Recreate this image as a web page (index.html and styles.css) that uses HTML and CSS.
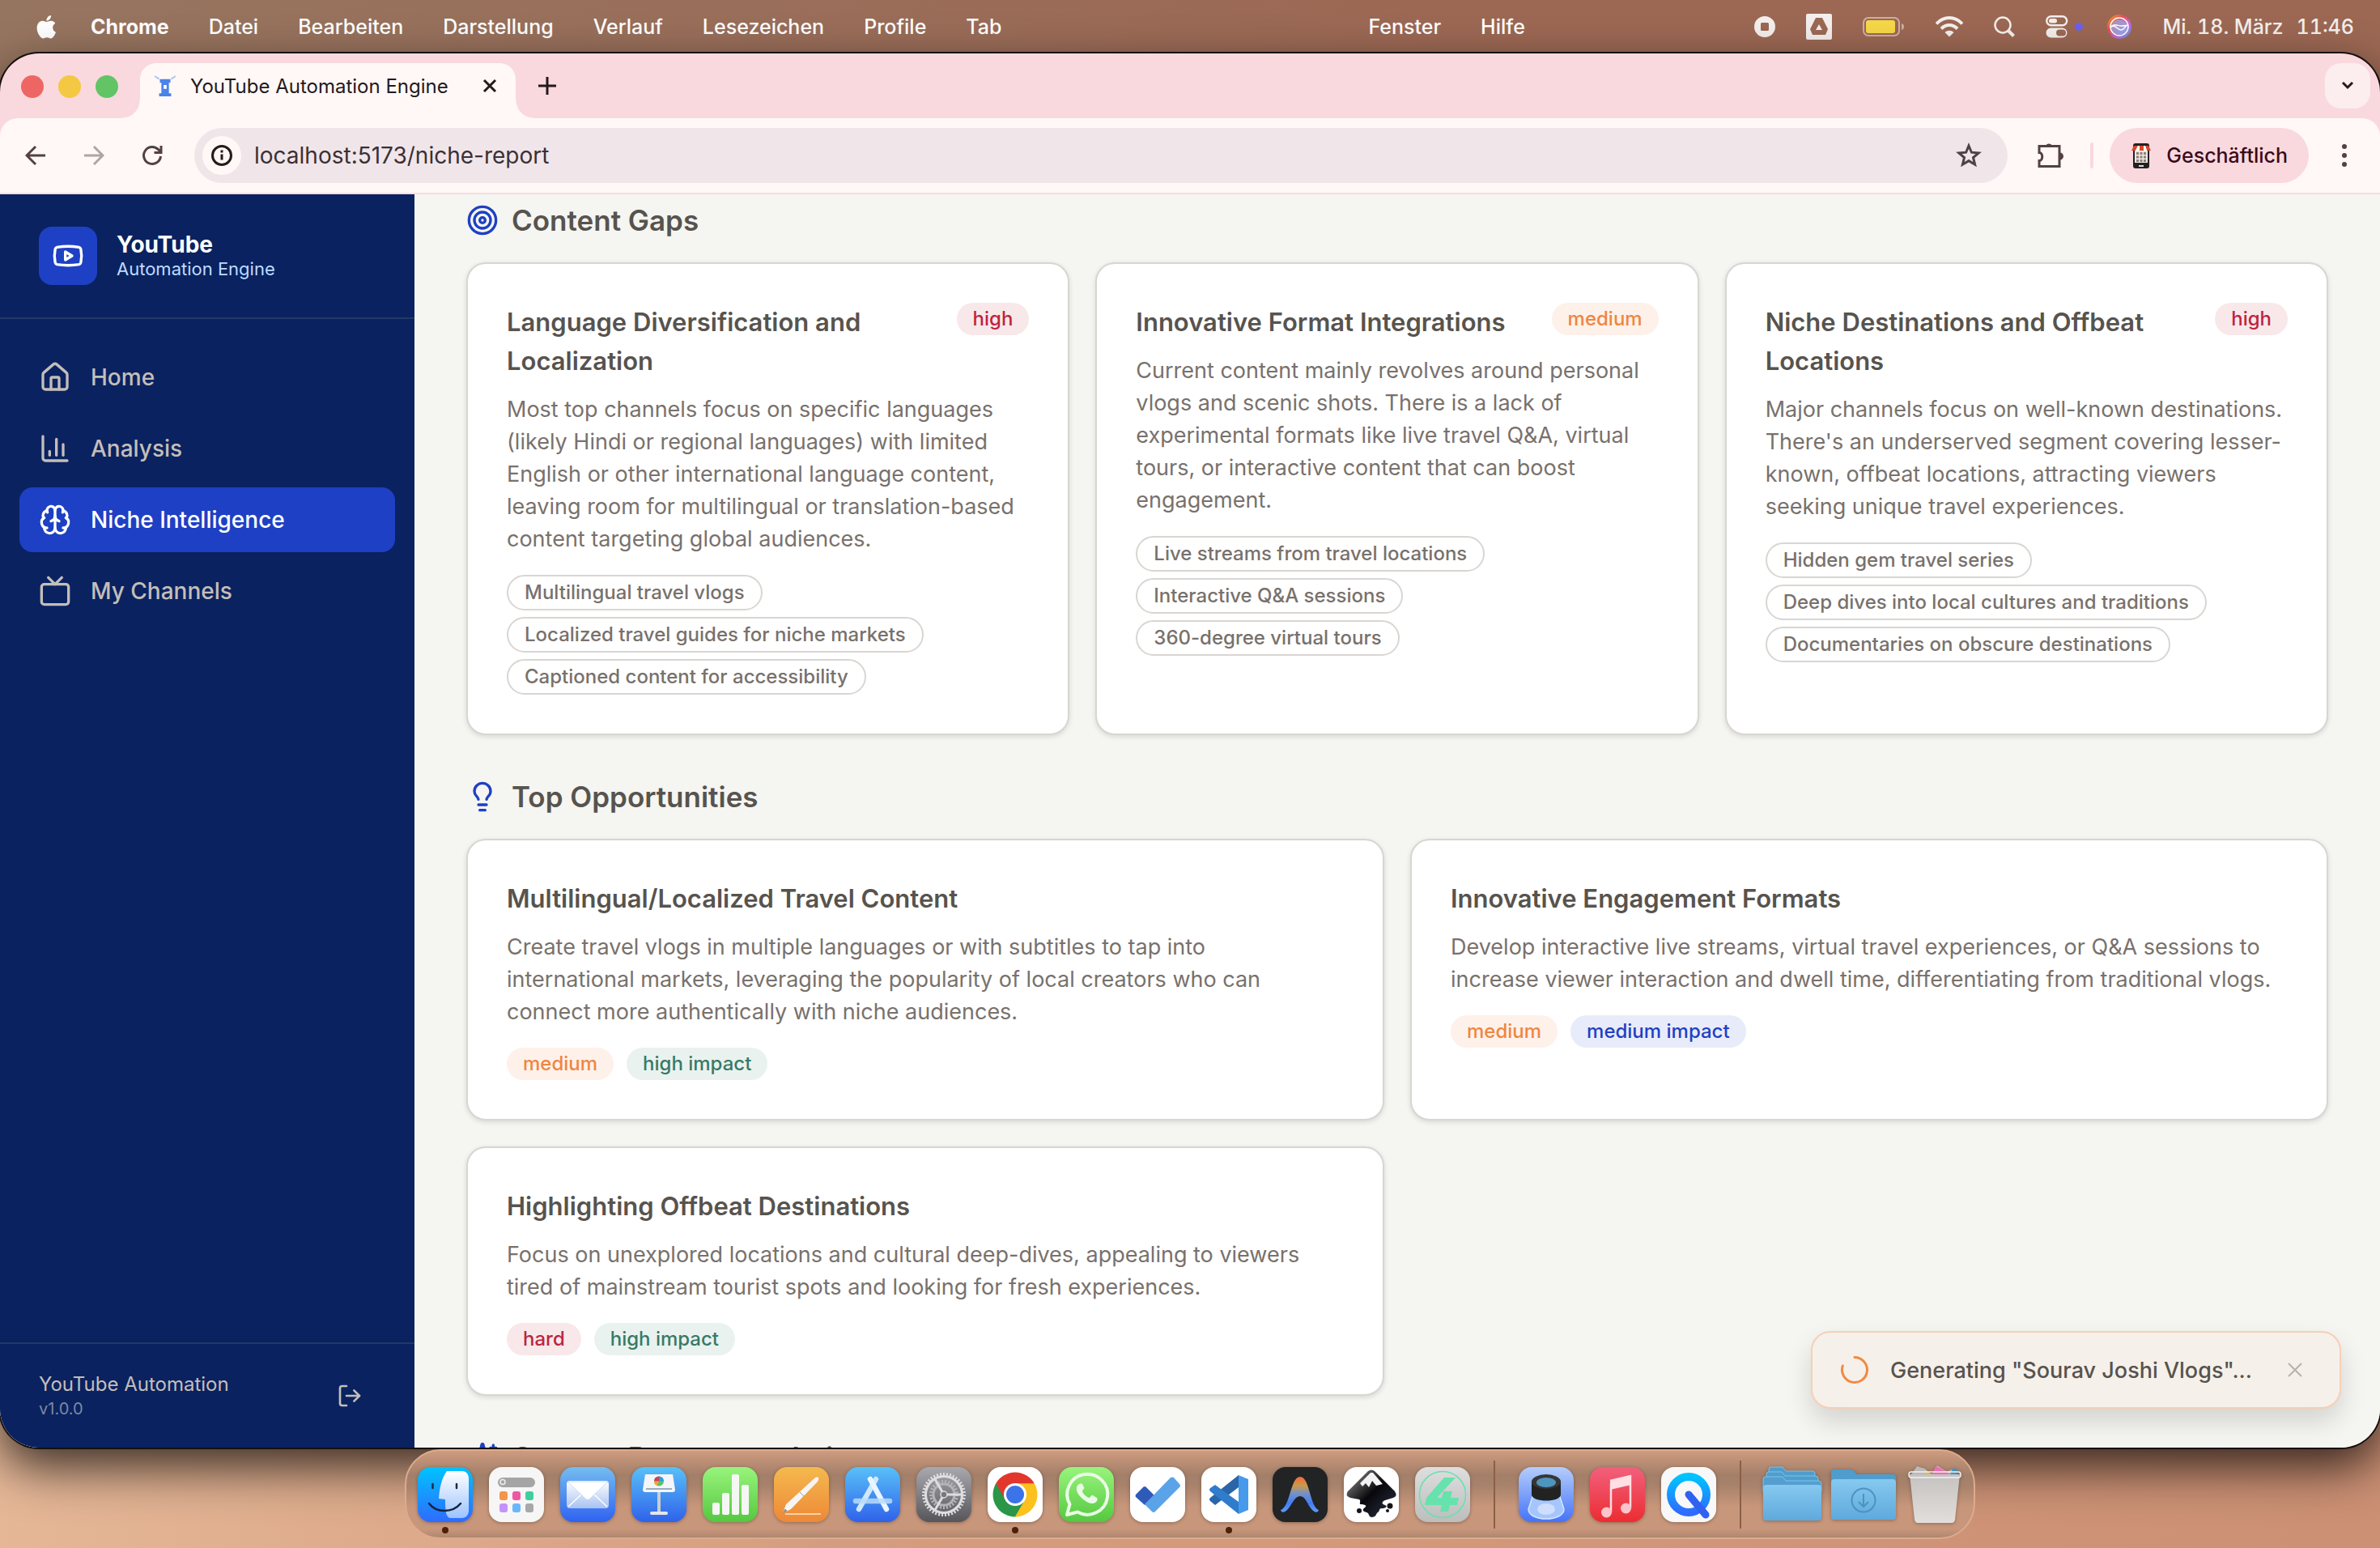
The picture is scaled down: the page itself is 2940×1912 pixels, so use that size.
FILE: index.html
```html
<!DOCTYPE html>
<html lang="en">
<head>
    <meta charset="UTF-8">
    <meta name="viewport" content="width=device-width, initial-scale=1.0">
    <title>YouTube Automation Engine</title>
    <link rel="stylesheet" href="styles.css">
</head>
<body>
    <!-- macOS menu bar -->
    <header class="menubar">
        <svg class="apple" viewBox="0 0 24 28"><path d="M17.6 14.8c0-2.8 2.3-4.1 2.4-4.2-1.3-1.9-3.3-2.2-4.1-2.2-1.7-.2-3.4 1-4.3 1s-2.200-1-3.700-1C6 8.400 4.200 9.500 3.300 11.200c-2 3.400-.5 8.500 1.400 11.200.9 1.400 2.100 2.900 3.500 2.800 1.400-.1 2-.9 3.700-.9s2.200.9 3.700.9c1.500 0 2.500-1.400 3.400-2.700 1.100-1.600 1.500-3.100 1.600-3.200-.1 0-3-1.200-3-4.500zM14.800 6.600c.8-.9 1.300-2.200 1.100-3.500-1.100 0-2.400.7-3.200 1.700-.7.800-1.300 2.100-1.200 3.400 1.300.1 2.500-.7 3.300-1.600z"/></svg>
        <nav class="menu">
            <a href="#" class="app-name">Chrome</a>
            <a href="#">Datei</a>
            <a href="#">Bearbeiten</a>
            <a href="#">Darstellung</a>
            <a href="#">Verlauf</a>
            <a href="#">Lesezeichen</a>
            <a href="#">Profile</a>
            <a href="#">Tab</a>
        </nav>
        <nav class="menu menu-after-notch">
            <a href="#">Fenster</a>
            <a href="#">Hilfe</a>
        </nav>
        <div class="menu-status">
            <svg width="26" height="26" viewBox="0 0 26 26"><path fill-rule="evenodd" d="M13 0a13 13 0 1 0 0 26 13 13 0 0 0 0-26zM9.500 8h7a1.500 1.500 0 0 1 1.500 1.500v7a1.500 1.500 0 0 1-1.500 1.500h-7A1.500 1.500 0 0 1 8 16.500v-7A1.500 1.500 0 0 1 9.500 8z"/></svg>
            <svg width="32" height="32" viewBox="0 0 32 32"><path fill-rule="evenodd" d="M2 0h28a2 2 0 0 1 2 2v28a2 2 0 0 1-2 2H2a2 2 0 0 1-2-2V2a2 2 0 0 1 2-2zM12 5L5 19l3 7h16l3-7-7-14zM16 13l4 7h-8z"/></svg>
            <svg width="52" height="24" viewBox="0 0 52 24"><rect x="1" y="1" width="44" height="22" rx="6" fill="none" stroke="#cdb0a4" stroke-width="2"/><rect x="4" y="4" width="36" height="16" rx="3" fill="#f7d848"/><path d="M48 8c4 1 4 7 0 8z" fill="#cdb0a4"/></svg>
            <svg width="34" height="26" viewBox="0 0 34 26"><g fill="none" stroke="#f4efed" stroke-width="4"><path d="M1 9.500C10-.5 24-.5 33 9.500"/><path d="M7 15.500c6-6 14-6 20 0"/></g><path d="M11.500 20c3-3 8-3 11 0L17 25.500z"/></svg>
            <svg width="26" height="26" viewBox="0 0 26 26"><g fill="none" stroke="#f4efed"><circle cx="11" cy="11" r="9.500" stroke-width="2.500"/><path d="M18 18l6.500 6.500" stroke-width="4"/></g></svg>
            <span class="control-center">
                <svg width="28" height="28" viewBox="0 0 28 28"><rect x="1.200" y="1.200" width="25" height="11" rx="5.500" fill="none" stroke="#f4efed" stroke-width="2.400"/><rect x="4" y="4" width="10" height="5.500" rx="2.700"/><path fill-rule="evenodd" d="M6.500 15.500h14a6 6 0 0 1 0 12h-14a6 6 0 0 1 0-12zM17 17.500a4 4 0 0 0 0 8h4a4 4 0 0 0 0-8z"/></svg>
                <i></i>
            </span>
            <svg width="30" height="30" viewBox="0 0 30 30">
                <defs><linearGradient id="siri" x1="0" y1="0" x2="1" y2="1"><stop offset="0" stop-color="#f0b02c"/><stop offset=".35" stop-color="#e84e50"/><stop offset=".65" stop-color="#c964d8"/><stop offset="1" stop-color="#3fa9f5"/></linearGradient></defs>
                <circle cx="15" cy="15" r="15" fill="url(#siri)"/><circle cx="15" cy="16" r="10" fill="#8fb4ee" fill-opacity=".7"/><g fill="none" stroke="#fff" stroke-width="1.500"><circle cx="15" cy="15" r="11"/><path d="M4 16c6-5 9 3 13 3s6-6 8-6-4 1-8 1-8-4-13 2"/></g>
            </svg>
            <time class="clock"><span>Mi. 18. März</span><span>11:46</span></time>
        </div>
    </header>

    <!-- Browser window -->
    <div class="window">
        <div class="tabstrip">
            <div class="lights"><i class="red"></i><i class="yellow"></i><i class="green"></i></div>
            <div class="tab">
                <svg class="favicon" viewBox="0 0 28 28"><path d="M7 5h14v5h-2v14h3v4H6v-4h3V10H7z" fill="#4a83ea"/><path d="M12 13h4v5h-4z" fill="#fff"/><path d="M0 1l6 4M28 1l-6 4" stroke="#a9c4ee" stroke-width="2"/></svg>
                <span class="tab-title">YouTube Automation Engine</span>
                <button class="tab-close" aria-label="Close tab"><svg width="18" height="18" viewBox="0 0 18 18"><path d="M2 2l14 14M16 2L2 16"/></svg></button>
            </div>
            <button class="new-tab" aria-label="New tab"><svg width="22" height="22" viewBox="0 0 22 22"><path d="M11 0v22M0 11h22"/></svg></button>
            <button class="tab-search" aria-label="Search tabs"><svg width="16" height="12" viewBox="0 0 16 12"><path d="M2 2l6 6 6-6"/></svg></button>
        </div>
        <div class="toolbar">
            <button class="tool" aria-label="Back"><svg width="26" height="26" viewBox="0 0 26 26"><path d="M25 13H3M13 2L2 13l11 11"/></svg></button>
            <button class="tool muted" aria-label="Forward"><svg width="26" height="26" viewBox="0 0 26 26"><path d="M1 13h22M13 2l11 11-11 11"/></svg></button>
            <button class="tool" aria-label="Reload"><svg width="26" height="26" viewBox="0 0 26 26"><path d="M23.500 14A10.500 10.500 0 1 1 20.500 5.600L24 9M24 1v8.500h-8.500"/></svg></button>
            <div class="address">
                <button class="site-info" aria-label="Site information"><svg width="28" height="28" viewBox="0 0 28 28"><circle cx="14" cy="14" r="11.500"/><path d="M14 12.500v7M14 7.500v3"/></svg></button>
                <input class="url" type="text" value="localhost:5173/niche-report" aria-label="Address">
                <button class="star" aria-label="Bookmark"><svg width="32" height="32" viewBox="0 0 32 32"><path d="M16 4l3.400 8.200 8.800.7-6.700 5.700 2.100 8.600L16 22.600l-7.600 4.600 2.100-8.600-6.700-5.700 8.800-.7z"/></svg></button>
            </div>
            <button class="puzzle" aria-label="Extensions"><svg width="34" height="34" viewBox="0 0 34 34"><path d="M3 5.500h25v25H3v-7c5 0 5-10 0-10z"/><path class="solid" d="M11 5a4.500 4.500 0 0 1 8 0zM28.500 13.500a4.500 4.500 0 0 1 0 9z"/></svg></button>
            <span class="tool-divider"></span>
            <button class="profile">
                <svg width="26" height="32" viewBox="0 0 26 32"><rect x="3" y="1" width="20" height="31" rx="3" fill="#222"/><rect x="5" y="4" width="16" height="21" fill="#eee7e2"/><path d="M7 12h3v3H7zM11.500 12h3v3h-3zM16 12h3v3h-3zM7 16.500h3v3H7zM11.500 16.500h3v3h-3zM16 16.500h3v3h-3zM7 21h3v3H7zM11.500 21h3v3h-3zM16 21h3v3h-3z" fill="#8f7e78"/><path d="M4 4h5l-3 6H1zM11 4h5v6h-5zM18 4h4l3 6h-5z" fill="#d8472b"/><path d="M9 4h2v6H6zM16 4h2l2 6h-4z" fill="#fff"/><rect x="10" y="28" width="6" height="2" fill="#ddd"/></svg>
                Geschäftlich
            </button>
            <button class="more" aria-label="Menu"><svg width="8" height="30" viewBox="0 0 8 30"><circle cx="4" cy="4" r="3"/><circle cx="4" cy="15" r="3"/><circle cx="4" cy="26" r="3"/></svg></button>
        </div>

        <div class="app">
            <aside class="sidebar">
                <div class="brand">
                    <div class="brand-logo">
                        <svg class="icon" viewBox="0 0 24 24"><path d="M2.500 17a24.120 24.120 0 0 1 0-10 2 2 0 0 1 1.400-1.400 49.560 49.560 0 0 1 16.200 0A2 2 0 0 1 21.500 7a24.120 24.120 0 0 1 0 10 2 2 0 0 1-1.400 1.400 49.550 49.550 0 0 1-16.200 0A2 2 0 0 1 2.500 17"/><path d="m10 15 5-3-5-3z"/></svg>
                    </div>
                    <div>
                        <div class="brand-name">YouTube</div>
                        <div class="brand-sub">Automation Engine</div>
                    </div>
                </div>
                <nav class="side-nav">
                    <a href="#"><svg class="icon" viewBox="0 0 24 24"><path d="M15 21v-8a1 1 0 0 0-1-1h-4a1 1 0 0 0-1 1v8"/><path d="M3 10a2 2 0 0 1 .709-1.528l7-5.999a2 2 0 0 1 2.582 0l7 5.999A2 2 0 0 1 21 10v9a2 2 0 0 1-2 2H5a2 2 0 0 1-2-2z"/></svg>Home</a>
                    <a href="#"><svg class="icon" viewBox="0 0 24 24"><path d="M3 3v16a2 2 0 0 0 2 2h16"/><path d="M18 17V9"/><path d="M13 17V5"/><path d="M8 17v-3"/></svg>Analysis</a>
                    <a href="#" class="active"><svg class="icon" viewBox="0 0 24 24"><path d="M12 18V5"/><path d="M15 13a4.170 4.170 0 0 1-3-4 4.170 4.170 0 0 1-3 4"/><path d="M17.598 6.500A3 3 0 1 0 12 5a3 3 0 1 0-5.598 1.500"/><path d="M17.997 5.125a4 4 0 0 1 2.526 5.770"/><path d="M18 18a4 4 0 0 0 2-7.464"/><path d="M19.967 17.483A4 4 0 1 1 12 18a4 4 0 1 1-7.967-.517"/><path d="M6 18a4 4 0 0 1-2-7.464"/><path d="M6.003 5.125a4 4 0 0 0-2.526 5.770"/></svg>Niche Intelligence</a>
                    <a href="#"><svg class="icon" viewBox="0 0 24 24"><path d="m17 2-5 5-5-5"/><rect width="20" height="15" x="2" y="7" rx="2"/></svg>My Channels</a>
                </nav>
                <div class="side-footer">
                    <div>
                        <div class="footer-name">YouTube Automation</div>
                        <div class="footer-version">v1.0.0</div>
                    </div>
                    <button class="logout" aria-label="Log out"><svg class="icon" viewBox="0 0 24 24"><path d="m16 17 5-5-5-5"/><path d="M21 12H9"/><path d="M9 21H5a2 2 0 0 1-2-2V5a2 2 0 0 1 2-2h4"/></svg></button>
                </div>
            </aside>

            <main class="content">
                <section>
                    <h2><svg class="icon" viewBox="0 0 24 24"><circle cx="12" cy="12" r="10"/><circle cx="12" cy="12" r="6"/><circle cx="12" cy="12" r="2"/></svg>Content Gaps</h2>
                    <div class="cards three">
                        <article class="card">
                            <div class="card-head">
                                <h3>Language Diversification and Localization</h3>
                                <span class="badge red">high</span>
                            </div>
                            <p>Most top channels focus on specific languages (likely Hindi or regional languages) with limited English or other international language content, leaving room for multilingual or translation-based content targeting global audiences.</p>
                            <ul class="chips">
                                <li>Multilingual travel vlogs</li>
                                <li>Localized travel guides for niche markets</li>
                                <li>Captioned content for accessibility</li>
                            </ul>
                        </article>
                        <article class="card">
                            <div class="card-head">
                                <h3>Innovative Format Integrations</h3>
                                <span class="badge orange">medium</span>
                            </div>
                            <p>Current content mainly revolves around personal vlogs and scenic shots. There is a lack of experimental formats like live travel Q&amp;A, virtual tours, or interactive content that can boost engagement.</p>
                            <ul class="chips">
                                <li>Live streams from travel locations</li>
                                <li>Interactive Q&amp;A sessions</li>
                                <li>360-degree virtual tours</li>
                            </ul>
                        </article>
                        <article class="card">
                            <div class="card-head">
                                <h3>Niche Destinations and Offbeat Locations</h3>
                                <span class="badge red">high</span>
                            </div>
                            <p>Major channels focus on well-known destinations. There's an underserved segment covering lesser-known, offbeat locations, attracting viewers seeking unique travel experiences.</p>
                            <ul class="chips">
                                <li>Hidden gem travel series</li>
                                <li>Deep dives into local cultures and traditions</li>
                                <li>Documentaries on obscure destinations</li>
                            </ul>
                        </article>
                    </div>
                </section>

                <section>
                    <h2><svg class="icon" viewBox="0 0 24 24"><path d="M15 14c.2-1 .7-1.700 1.500-2.500 1-.9 1.500-2.200 1.500-3.500A6 6 0 0 0 6 8c0 1 .2 2.200 1.500 3.500.7.7 1.300 1.500 1.500 2.500"/><path d="M9 18h6"/><path d="M10 22h4"/></svg>Top Opportunities</h2>
                    <div class="cards two">
                        <article class="card">
                            <h3>Multilingual/Localized Travel Content</h3>
                            <p>Create travel vlogs in multiple languages or with subtitles to tap into international markets, leveraging the popularity of local creators who can connect more authentically with niche audiences.</p>
                            <div class="badges"><span class="badge orange">medium</span><span class="badge green">high impact</span></div>
                        </article>
                        <article class="card">
                            <h3>Innovative Engagement Formats</h3>
                            <p>Develop interactive live streams, virtual travel experiences, or Q&amp;A sessions to increase viewer interaction and dwell time, differentiating from traditional vlogs.</p>
                            <div class="badges"><span class="badge orange">medium</span><span class="badge blue">medium impact</span></div>
                        </article>
                        <article class="card">
                            <h3>Highlighting Offbeat Destinations</h3>
                            <p>Focus on unexplored locations and cultural deep-dives, appealing to viewers tired of mainstream tourist spots and looking for fresh experiences.</p>
                            <div class="badges"><span class="badge red">hard</span><span class="badge green">high impact</span></div>
                        </article>
                    </div>
                </section>

                <section>
                    <h2><svg class="icon" viewBox="0 0 24 24"><path d="M9.937 15.500A2 2 0 0 0 8.500 14.063l-6.135-1.582a.5.5 0 0 1 0-.962L8.500 9.936A2 2 0 0 0 9.937 8.500l1.582-6.135a.5.5 0 0 1 .963 0L14.063 8.500A2 2 0 0 0 15.500 9.937l6.135 1.581a.5.5 0 0 1 0 .964L15.500 14.063a2 2 0 0 0-1.437 1.437l-1.582 6.135a.5.5 0 0 1-.963 0z"/><path d="M20 3v4"/><path d="M22 5h-4"/></svg>Content Recommendations</h2>
                </section>
            </main>

            <div class="toast" role="status">
                <svg class="spinner" viewBox="0 0 36 36"><path d="M18 2.500A15.500 15.500 0 1 1 3.300 13"/></svg>
                <span>Generating "Sourav Joshi Vlogs"...</span>
                <button class="toast-close" aria-label="Dismiss"><svg width="18" height="18" viewBox="0 0 18 18"><path d="M1 1l16 16M17 1L1 17"/></svg></button>
            </div>
        </div>
    </div>

    <!-- Dock -->
    <footer class="dock-area">
        <div class="dock">
            <a href="#" class="running" aria-label="Finder"><svg viewBox="0 0 68 68">
                <defs>
                    <linearGradient id="finder" x2="0" y2="1"><stop stop-color="#00c3ff"/><stop offset="1" stop-color="#2f6bff"/></linearGradient>
                    <linearGradient id="finderFace" x2="0" y2="1"><stop stop-color="#fff"/><stop offset="1" stop-color="#9cc3ff"/></linearGradient>
                    <linearGradient id="skyBlue" x2="0" y2="1"><stop stop-color="#74bdf0"/><stop offset="1" stop-color="#2f62f0"/></linearGradient>
                    <linearGradient id="cyanBlue" x2="0" y2="1"><stop stop-color="#58c0f8"/><stop offset="1" stop-color="#2f62ea"/></linearGradient>
                    <linearGradient id="green" x2="0" y2="1"><stop stop-color="#98f47c"/><stop offset="1" stop-color="#55c840"/></linearGradient>
                    <linearGradient id="orange" x2="0" y2="1"><stop stop-color="#f5b94e"/><stop offset="1" stop-color="#ee8837"/></linearGradient>
                    <linearGradient id="gray" x2="0" y2="1"><stop stop-color="#a8a8ae"/><stop offset="1" stop-color="#56565a"/></linearGradient>
                    <linearGradient id="red" x2="0" y2="1"><stop stop-color="#f2607c"/><stop offset="1" stop-color="#ec2c32"/></linearGradient>
                    <linearGradient id="folder" x2="0" y2="1"><stop stop-color="#86c9f0"/><stop offset="1" stop-color="#5fa9dc"/></linearGradient>
                    <linearGradient id="loupe" x2="0" y2="1"><stop stop-color="#b4cdfb"/><stop offset="1" stop-color="#4573f8"/></linearGradient>
                    <linearGradient id="arc" x2="0" y2="1"><stop stop-color="#f26a3c"/><stop offset=".25" stop-color="#c99a4a"/><stop offset=".5" stop-color="#6f8fd0"/><stop offset=".75" stop-color="#3f7ef5"/><stop offset="1" stop-color="#5f9bff"/></linearGradient>
                    <linearGradient id="envelope" x2="0" y2="1"><stop stop-color="#fff"/><stop offset="1" stop-color="#a8c2f2"/></linearGradient>
                    <linearGradient id="silver" x2="0" y2="1"><stop stop-color="#dedede"/><stop offset="1" stop-color="#bdbdbd"/></linearGradient>
                    <linearGradient id="bin" x2="0" y2="1"><stop stop-color="#c4c2c0"/><stop offset="1" stop-color="#e2dedc"/></linearGradient>
                    <linearGradient id="ink" x1="0" y1="0" x2="1" y2="1"><stop stop-color="#999"/><stop offset=".5" stop-color="#08080c"/><stop offset="1" stop-color="#2c3348"/></linearGradient>
                </defs>
                <rect width="68" height="68" rx="16" fill="url(#finder)"/><path d="M26 39c1-14 4-26 10-34h19c5 0 8 4 8 9v39c0 6-3 10-9 10H41c-6 0-7-8-7-23z" fill="url(#finderFace)"/><path d="M18.500 21v5M48 21v5" stroke="#1b2a44" stroke-width="2.500" stroke-linecap="round"/><path d="M14 45c9 12 29 12 39 0" fill="none" stroke="#13233c" stroke-width="2.500" stroke-linecap="round"/></svg></a>
            <a href="#" aria-label="Apps"><svg viewBox="0 0 68 68"><rect width="68" height="68" rx="16" fill="#f6f6f6"/><rect x="11" y="13" width="46" height="12" rx="6" fill="#a5a5a5"/><circle cx="17" cy="18.500" r="3" fill="none" stroke="#eee" stroke-width="1.500"/><rect x="13" y="30" width="10" height="11" rx="3" fill="#f5944a"/><rect x="29" y="30" width="10" height="11" rx="3" fill="#ee58a5"/><rect x="45" y="30" width="10" height="11" rx="3" fill="#3fcf9e"/><rect x="13" y="45" width="10" height="11" rx="3" fill="#c493fa"/><rect x="29" y="45" width="10" height="11" rx="3" fill="#69b7fa"/><rect x="45" y="45" width="10" height="11" rx="3" fill="#a8a8a8"/></svg></a>
            <a href="#" aria-label="Mail"><svg viewBox="0 0 68 68"><rect width="68" height="68" rx="16" fill="url(#skyBlue)"/><rect x="8" y="17" width="52" height="34" rx="4" fill="url(#envelope)"/><path d="M10 49l18-17M58 49L40 32" stroke="#fff" stroke-width="1.500"/><path d="M9 18h50L38 38c-3 3-5 3-8 0z" fill="#fff" stroke="#c9dbf7" stroke-width="1"/></svg></a>
            <a href="#" aria-label="Keynote"><svg viewBox="0 0 68 68"><rect width="68" height="68" rx="16" fill="url(#cyanBlue)"/><path d="M34 28v28" stroke="#c9cdd4" stroke-width="4"/><rect x="23" y="55" width="22" height="4" rx="2" fill="#e4e6ea"/><path d="M17 9h34l3 19q0 3-3 3H17q-3 0-3-3z" fill="#f3f5f8"/><path d="M18 27h32" stroke="#7d93ab" stroke-width="1.500"/><circle cx="34" cy="17.500" r="6" fill="#5ac26a"/><path d="M34 17.500v-6a6 6 0 0 1 6 6z" fill="#2f9be8"/><path d="M34 17.500v-6a6 6 0 0 0-6 6z" fill="#d43c55"/><path d="M34 17.500h-6a6 6 0 0 0 4 5.500z" fill="#f3a33a"/></svg></a>
            <a href="#" aria-label="Numbers"><svg viewBox="0 0 68 68"><rect width="68" height="68" rx="16" fill="url(#green)"/><g fill="#f5f7f4"><rect x="12" y="44" width="9" height="15" rx="2"/><rect x="24" y="32" width="9" height="27" rx="2"/><rect x="36" y="9" width="9" height="50" rx="2"/><rect x="48" y="22" width="9" height="37" rx="2"/></g></svg></a>
            <a href="#" aria-label="Pages"><svg viewBox="0 0 68 68"><rect width="68" height="68" rx="16" fill="url(#orange)"/><path d="M14 58h44" stroke="#fbd3a4" stroke-width="2"/><path d="M11 57l4-11L50 14c4-3 7-1 4 4L21 52z" fill="#f7f5f3"/><path d="M32 31l5 5M11 57l3-5 2 2z" fill="#888" stroke="#999" stroke-width="1"/></svg></a>
            <a href="#" aria-label="App Store"><svg viewBox="0 0 68 68"><rect width="68" height="68" rx="16" fill="url(#cyanBlue)"/><g stroke-width="6.500" stroke-linecap="round" fill="none"><path d="M38 15L17 52" stroke="#cfe8fc"/><path d="M31 15l20 37" stroke="#e9f5ff"/><path d="M13 42h42" stroke="#b9dbfb" stroke-opacity=".85"/></g></svg></a>
            <a href="#" aria-label="System Settings"><svg viewBox="0 0 68 68"><rect width="68" height="68" rx="16" fill="url(#gray)"/><g fill="none"><circle cx="34" cy="34" r="25" stroke="#dedee0" stroke-width="4" stroke-dasharray="2 2"/><circle cx="34" cy="34" r="22.500" stroke="#dedee0" stroke-width="3"/><circle cx="34" cy="34" r="16" stroke="#b4b4b8" stroke-width="4" stroke-dasharray="2 2"/><circle cx="34" cy="34" r="13" stroke="#b4b4b8" stroke-width="3"/><path d="M34 34h22M34 34L23 15M34 34L23 53" stroke="#dedee0" stroke-width="3"/></g><circle cx="34" cy="34" r="4" fill="#77777c" stroke="#dedee0" stroke-width="1.500"/></svg></a>
            <a href="#" class="running" aria-label="Chrome"><svg viewBox="0 0 68 68"><rect width="68" height="68" rx="16" fill="#fff"/><path d="M34 34L10.200 20.300A27.500 27.500 0 0 1 57.800 20.300z" fill="#e2372c"/><path d="M34 34L57.800 20.300A27.500 27.500 0 0 1 34 61.500z" fill="#fcc11c"/><path d="M34 34v27.500A27.500 27.500 0 0 1 10.200 20.300z" fill="#2a9648"/><path d="M34 20.300h23.800L46 40.500z" fill="#fcc11c"/><path d="M10.200 20.300L22 41l12-7V20.300z" fill="#e2372c"/><path d="M22 41l12 20.500L46 41z" fill="#2a9648"/><path d="M46 41L34 61.500 40 61l12-15z" fill="#fcc11c"/><circle cx="34" cy="34" r="14" fill="#fff"/><circle cx="34" cy="34" r="11" fill="#3b74e8"/></svg></a>
            <a href="#" aria-label="WhatsApp"><svg viewBox="0 0 68 68"><rect width="68" height="68" rx="16" fill="url(#green)"/><path d="M10 59l3.500-13A25 25 0 1 1 23 55.500z" fill="none" stroke="#eafbe5" stroke-width="4" stroke-linejoin="round"/><path d="M25 21c-5 3-4 10 2 16s13 10 18 7c3-2 3-5 2-6l-5-3c-2-1-3 3-5 3-3-1-8-6-8-8s3-3 2-5l-2-4c-1-1-3-1-4 0z" fill="#eafbe5"/></svg></a>
            <a href="#" aria-label="To Do"><svg viewBox="0 0 68 68"><rect width="68" height="68" rx="16" fill="#fff"/><path d="M7 34l9-9q2-2 4 0l11 11-10 10q-2 2-4 0L7 37q-1-1 0-3z" fill="#2f5ab8"/><path d="M18 46l32-33q2-1 4 0l7 8q2 2 0 4L31 55q-2 2-4 0z" fill="#5ba3e8"/></svg></a>
            <a href="#" class="running" aria-label="Visual Studio Code"><svg viewBox="0 0 68 68"><rect width="68" height="68" rx="16" fill="#fff"/><path d="M46 10v15L17 47l-6-5q-2-2 0-4z" fill="#2a65a8"/><path d="M46 58V43L17 22l-6 4q-2 2 0 4z" fill="#2f7ccc"/><path d="M46 10l12 5v38l-12 5z" fill="#4799ec"/></svg></a>
            <a href="#" aria-label="Antigravity"><svg viewBox="0 0 68 68"><rect width="68" height="68" rx="16" fill="#222325"/><path d="M10 53c12-4 12-41 24-41s12 37 23 41c-1 4-5 3-8 0-6-6-8-17-15-17s-10 11-16 17c-3 3-7 4-8 0z" fill="url(#arc)"/></svg></a>
            <a href="#" aria-label="Inkscape"><svg viewBox="0 0 68 68"><rect width="68" height="68" rx="16" fill="#fff"/><path d="M30 5q4-3 8 0l25 25q4 6-2 8l-10 3c-5 2-4 5 0 6 4 2 0 4-4 4s-2 3-5 5-1 5-7 6c-5 0-3-5-7-6s-6-3-2-6-2-4-5-4 1-4-2-6l-11-2q-7-3-3-8z" fill="url(#ink)"/><path d="M33 7L20 20l3 4 4-4 4 5 4-8 5 6 8-2L36 7z" fill="#f2f2f2"/><circle cx="19" cy="54" r="3" fill="#14141a"/><circle cx="57" cy="48" r="3.500" fill="#14141a"/><circle cx="54" cy="54" r="2" fill="#14141a"/></svg></a>
            <a href="#" aria-label="4alone"><svg viewBox="0 0 68 68"><rect width="68" height="68" rx="16" fill="url(#silver)"/><circle cx="34" cy="34" r="28.500" fill="none" stroke="#66e2ad" stroke-width="1.500"/><path d="M36 13h14L27 38h6l2-8h11l-2 8h10l-2 9H43l-2 8H31l2-8H12l2-9z" fill="#66e2ad"/></svg></a>
            <span class="dock-divider"></span>
            <a href="#" aria-label="Preview"><svg viewBox="0 0 68 68"><rect width="68" height="68" rx="16" fill="url(#loupe)"/><path d="M18 34h32l6 18c0 16-44 16-44 0z" fill="#a5c6fc" stroke="#d5e6ff" stroke-width="1.500"/><ellipse cx="34" cy="52" rx="11" ry="7" fill="#cfdefd"/><path d="M16 17h36v17c0 10-36 10-36 0z" fill="#222"/><ellipse cx="34" cy="18" rx="18" ry="9" fill="#363636"/><ellipse cx="34" cy="19" rx="12" ry="6" fill="#4d95bf"/></svg></a>
            <a href="#" aria-label="Music"><svg viewBox="0 0 68 68"><rect width="68" height="68" rx="16" fill="url(#red)"/><path d="M25 17l25-6v40" fill="none" stroke="#ffdfe4" stroke-width="2.500"/><path d="M25 17l26-6v11l-26 6z" fill="#ffdfe4"/><path d="M26 20v36" stroke="#ffdfe4" stroke-width="2.500"/><circle cx="20.500" cy="56" r="6.500" fill="#fbc3ca"/><circle cx="44.500" cy="51" r="6.500" fill="#fbc3ca"/></svg></a>
            <a href="#" aria-label="QuickTime"><svg viewBox="0 0 68 68"><rect width="68" height="68" rx="16" fill="#f8f8f8"/><circle cx="34" cy="34" r="22" fill="none" stroke="url(#finder)" stroke-width="10"/><path d="M34 34l21 25" stroke="#2f62f0" stroke-width="9" stroke-linecap="round"/></svg></a>
            <span class="dock-divider"></span>
            <a href="#" aria-label="Documents"><svg viewBox="0 0 68 68"><g stroke="#7cc3ec" stroke-width="1"><path d="M5 3q0-3 3-3h14l4 5h33q3 0 3 3v14H5z" fill="#4f9dcc"/><path d="M2 9q0-3 3-3h16l4 5h37q4 0 4 3v8H2z" fill="#4f9dcc"/><path d="M-2 15q0-3 3-3h21l4 5h40q4 0 4 3v10H-2z" fill="#559fd0"/></g><rect x="-2" y="22" width="72" height="44" rx="4" fill="url(#folder)"/></svg></a>
            <a href="#" aria-label="Downloads"><svg viewBox="0 0 68 68"><path d="M-6 6q0-3 4-3h20q3 0 5 3l3 3h44q4 0 4 4v12H-6z" fill="#4f9dcc"/><rect x="-6" y="15" width="80" height="50" rx="4" fill="url(#folder)"/><g fill="none" stroke="#4d92c2" stroke-width="2"><circle cx="34" cy="41" r="14.500"/><path d="M34 33v15M28 43l6 6 6-6"/></g></svg></a>
            <a href="#" aria-label="Trash"><svg viewBox="0 0 68 68"><path d="M5 9L12-1l10 3 8 8 7-12 12 8 6-3 6 1-2 8z" fill="#b9b9b9"/><path d="M31 9l4-10 8 4 10 6z" fill="#ee6db0"/><path d="M25 12l-3-7 10 4z" fill="#e6bd37"/><path d="M52 11l4-9h6l-1 9z" fill="#3f93c4"/><path d="M3 9h62l-6 56q-1 4-4 4H13q-3 0-4-4z" fill="url(#bin)"/><rect x="2" y="6" width="64" height="7" rx="3" fill="none" stroke="#f2f2f2" stroke-width="1.500"/></svg></a>
        </div>
    </footer>
</body>
</html>
```

FILE: styles.css
```css
* {
    box-sizing: border-box;
}

body {
    margin: 0;
    height: 100vh;
    display: flex;
    flex-direction: column;
    overflow: hidden;
    font-family: Inter, 'Liberation Sans', sans-serif;
    color: #57534e;
    background: linear-gradient(90deg, #967560, #9c6854 60%, #9c6854) top / 100% 120px no-repeat,
        linear-gradient(90deg, #e5b797, #d59d7f 35%, #cc9074);
}

a {
    color: inherit;
    text-decoration: none;
}

button {
    display: flex;
    align-items: center;
    justify-content: center;
    padding: 0;
    border: none;
    background: none;
    font: inherit;
    color: inherit;
    cursor: pointer;
}

h2, h3, p, ul {
    margin: 0;
    padding: 0;
}

/* menu bar */
.menubar {
    flex: none;
    display: flex;
    align-items: center;
    height: 66px;
    padding: 0 32px 0 42px;
    font-size: 25px;
    font-weight: 500;
    color: #fff;
}

.apple {
    width: 32px;
    height: 36px;
    margin-right: 38px;
    fill: #fff;
}

.menu {
    display: flex;
    gap: 49px;
}

.menu .app-name {
    font-weight: 700;
}

.menu-after-notch {
    margin-left: 453px;
}

.menu-status {
    display: flex;
    align-items: center;
    gap: 38px;
    margin-left: auto;
    color: #f4efed;
}

.menu-status svg {
    fill: #f4efed;
}

.control-center {
    display: flex;
    align-items: center;
    gap: 8px;
}

.control-center i {
    width: 10px;
    height: 10px;
    margin-right: -8px;
    border-radius: 50%;
    background: #6a5ff0;
}

.clock {
    display: flex;
    gap: 16px;
    font-variant-numeric: tabular-nums;
}

/* browser window */
.window {
    flex: 1;
    min-height: 0;
    display: flex;
    flex-direction: column;
    overflow: hidden;
    border-radius: 48px;
    background: #f9d9de;
    box-shadow: 0 0 0 2px #16100e, 0 24px 60px rgba(0, 0, 0, 0.75);
}

.tabstrip {
    flex: none;
    display: flex;
    align-items: center;
    height: 80px;
    padding: 12px 12px 0 26px;
}

.lights {
    display: flex;
    gap: 18px;
    margin: 0 27px 10px 0;
}

.lights i {
    width: 28px;
    height: 28px;
    border-radius: 50%;
}

.lights .red { background: #ee6663; }
.lights .yellow { background: #f4c843; }
.lights .green { background: #63c466; }

.tab {
    position: relative;
    display: flex;
    align-items: center;
    width: 464px;
    height: 68px;
    padding: 0 20px 12px 18px;
    border-radius: 20px 20px 0 0;
    background: #fff8f6;
    font-size: 24px;
    color: #241a1c;
}

/* flared feet of the active tab */
.tab::before,
.tab::after {
    content: "";
    position: absolute;
    bottom: 0;
    width: 22px;
    height: 22px;
}

.tab::before {
    right: 100%;
    background: radial-gradient(circle at 0 0, transparent 21px, #fff8f6 22px);
}

.tab::after {
    left: 100%;
    background: radial-gradient(circle at 100% 0, transparent 21px, #fff8f6 22px);
}

.favicon {
    width: 26px;
    height: 26px;
    margin-right: 18px;
}

.tab-close {
    width: 24px;
    margin-left: auto;
}

.tabstrip button svg {
    fill: none;
    stroke: #241a1c;
    stroke-width: 3;
}

.new-tab {
    margin: 0 0 12px 28px;
}

.tab-search {
    width: 56px;
    height: 56px;
    margin: 0 0 12px auto;
    border-radius: 20px;
    background: #fcedef;
}

.toolbar {
    flex: none;
    display: flex;
    align-items: center;
    height: 94px;
    padding: 0 40px 0 8px;
    border-bottom: 2px solid #f3dde0;
    border-radius: 22px 22px 0 0;
    background: #fff8f6;
}

.tool {
    width: 72px;
    height: 68px;
}

.tool svg,
.puzzle svg {
    fill: none;
    stroke: #544044;
    stroke-width: 3;
}

.tool.muted svg {
    stroke: #aea5a5;
}

.address {
    flex: 1;
    display: flex;
    align-items: center;
    height: 68px;
    margin-left: 16px;
    padding: 0 32px 0 10px;
    border-radius: 34px;
    background: #f0e6ea;
}

.site-info {
    width: 48px;
    height: 48px;
    border-radius: 50%;
    background: #fff8f6;
}

.site-info svg,
.star svg {
    fill: none;
    stroke: #241a1c;
    stroke-width: 3;
}

.star svg {
    stroke: #4d4245;
}

.url {
    flex: 1;
    margin: 0 16px;
    padding: 0;
    border: none;
    outline: none;
    background: none;
    font: inherit;
    font-size: 28px;
    color: #3b3034;
}

.puzzle {
    margin: 0 32px 0 36px;
}

.puzzle .solid {
    fill: #544044;
    stroke: none;
}

.tool-divider {
    width: 4px;
    height: 32px;
    border-radius: 2px;
    background: #f9d9de;
}

.profile {
    gap: 18px;
    height: 68px;
    margin-left: 20px;
    padding: 0 26px;
    border-radius: 34px;
    background: #f9d9de;
    font-size: 25px;
    font-weight: 500;
    color: #3a0a1a;
}

.more {
    margin-left: 40px;
}

.more svg {
    fill: #544044;
}

/* app shell */
.app {
    position: relative;
    flex: 1;
    min-height: 0;
    display: flex;
    background: #f5f5f1;
}

.icon {
    flex: none;
    width: 40px;
    height: 40px;
    fill: none;
    stroke: currentColor;
    stroke-width: 2;
    stroke-linecap: round;
    stroke-linejoin: round;
}

.sidebar {
    flex: none;
    display: flex;
    flex-direction: column;
    width: 512px;
    background: #0a2260;
    color: #c4beb9;
}

.brand {
    display: flex;
    align-items: center;
    gap: 24px;
    padding: 40px 48px;
    border-bottom: 2px solid #243868;
    color: #fff;
}

.brand-logo {
    display: flex;
    align-items: center;
    justify-content: center;
    width: 72px;
    height: 72px;
    border-radius: 16px;
    background: #1e40c4;
}

.brand-name {
    font-size: 28px;
    font-weight: 700;
    line-height: 32px;
}

.brand-sub {
    font-size: 22px;
    line-height: 28px;
    color: #bfdbfe;
}

.side-nav {
    flex: 1;
    display: flex;
    flex-direction: column;
    gap: 8px;
    padding: 32px 24px;
}

.side-nav a {
    display: flex;
    align-items: center;
    gap: 24px;
    height: 80px;
    padding: 0 24px;
    border-radius: 16px;
    font-size: 28px;
    font-weight: 500;
}

.side-nav .active {
    background: #1e40c4;
    color: #fff;
}

.side-footer {
    display: flex;
    align-items: center;
    justify-content: space-between;
    padding: 32px 48px;
    border-top: 2px solid #243868;
}

.footer-name {
    font-size: 24px;
    line-height: 32px;
}

.footer-version {
    font-size: 20px;
    line-height: 28px;
    color: #7f88a0;
}

.logout {
    width: 64px;
    height: 64px;
}

.logout .icon {
    width: 32px;
    height: 32px;
}

.content {
    flex: 1;
    min-width: 0;
    overflow: hidden;
    padding: 4px 64px 0;
}

.content section {
    margin-bottom: 48px;
}

h2 {
    display: flex;
    align-items: center;
    gap: 16px;
    margin-bottom: 24px;
    font-size: 35px;
    font-weight: 600;
    line-height: 56px;
    color: #57534e;
}

h2 .icon {
    color: #1e40c4;
}

.cards {
    display: grid;
    gap: 32px;
}

.three {
    grid-template-columns: repeat(3, 1fr);
}

.two {
    grid-template-columns: repeat(2, 1fr);
}

.card {
    padding: 48px;
    border: 2px solid #d9d6d2;
    border-radius: 24px;
    background: #fff;
    box-shadow: 0 2px 6px rgba(0, 0, 0, 0.12);
}

.card-head {
    display: flex;
    align-items: flex-start;
    justify-content: space-between;
    gap: 16px;
}

.card h3 {
    font-size: 31px;
    font-weight: 600;
    line-height: 48px;
}

.card p {
    margin: 16px 0 24px;
    font-size: 27px;
    line-height: 40px;
    color: #78716c;
}

.two .card p {
    padding-right: 16px;
}

.chips {
    display: flex;
    flex-direction: column;
    align-items: flex-start;
    gap: 8px;
    list-style: none;
}

.chips li {
    padding: 0 20px;
    border: 2px solid #d9d6d2;
    border-radius: 22px;
    font-size: 24px;
    font-weight: 500;
    line-height: 40px;
    color: #78716c;
}

.badges {
    display: flex;
    gap: 16px;
}

.badge {
    flex: none;
    padding: 0 20px;
    border-radius: 20px;
    font-size: 24px;
    font-weight: 500;
    line-height: 40px;
}

.badge.red { background: #f8e8ea; color: #be2440; }
.badge.orange { background: #fef1ea; color: #ef8640; }
.badge.green { background: #eaf2ef; color: #377a66; }
.badge.blue { background: #e8ebf9; color: #1e40c4; }

.toast {
    position: absolute;
    right: 48px;
    bottom: 48px;
    display: flex;
    align-items: center;
    height: 96px;
    padding: 0 46px 0 34px;
    border: 2px solid #f6cfb6;
    border-radius: 24px;
    background: #f6f0ea;
    box-shadow: 0 16px 32px rgba(0, 0, 0, 0.14);
    font-size: 27px;
    font-weight: 500;
}

.spinner {
    width: 36px;
    height: 36px;
    margin-right: 26px;
    fill: none;
    stroke: #f08a42;
    stroke-width: 3;
    stroke-linecap: round;
}

.toast-close {
    margin-left: 44px;
}

.toast-close svg {
    stroke: #b8b2ad;
    stroke-width: 2;
}

/* dock */
.dock-area {
    flex: none;
    position: relative;
    display: flex;
    justify-content: center;
    height: 124px;
    padding: 2px 0 11px;
}

.dock {
    display: flex;
    align-items: flex-start;
    gap: 20px;
    padding: 20px 14px 0;
    border: 2px solid #dcab8e;
    border-radius: 44px;
    background: linear-gradient(#cf9b7f, #a37f69 28%, #a8826b 40%, #c8977b 65%, #c8977b 90%, #b08670);
}

.dock a {
    position: relative;
    width: 68px;
    height: 68px;
}

.dock svg {
    display: block;
    width: 68px;
    height: 68px;
    overflow: visible;
    filter: drop-shadow(0 1px 2px rgba(0, 0, 0, 0.3));
}

.dock .running::after {
    content: "";
    position: absolute;
    top: 74px;
    left: 30px;
    width: 8px;
    height: 8px;
    border-radius: 50%;
    background: #4c2108;
}

.dock-divider {
    width: 2px;
    height: 84px;
    margin: -8px 9px 0;
    background: #8b5f47;
}
```
